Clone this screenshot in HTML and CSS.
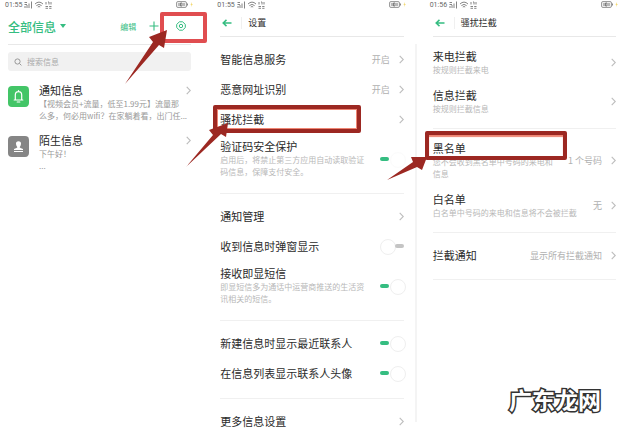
FILE: index.html
```
<!DOCTYPE html>
<html lang="zh-CN">
<head>
    <meta charset="UTF-8">
    <meta name="viewport" content="width=device-width, initial-scale=1.0">
    <title>骚扰拦截设置</title>
    <link rel="stylesheet" href="styles.css">
</head>
<body>
    <!-- Shared icons -->
    <svg class="sprite" aria-hidden="true">
        <symbol id="chevron" viewBox="0 0 5 9">
            <path d="M0.7 0.8 L4.3 4.5 L0.7 8.2" fill="none" stroke="#bdbdbd" stroke-width="1.1"/>
        </symbol>
        <symbol id="back" viewBox="0 0 10 8">
            <path d="M9.5 4 H1.5 M4.5 0.9 L1.2 4 L4.5 7.1" fill="none" stroke="#35bd81" stroke-width="1.5"/>
        </symbol>
        <symbol id="signal" viewBox="0 0 28 8">
            <g fill="none" stroke="#777" stroke-width="0.9">
                <path d="M0.5 1.5 H3 M0.5 3.5 H3 M1 7 V5 M3 7 V4 M5 7 V2.5 M7.5 7.5 V0.5"/>
                <path d="M11 3 Q15 -0.8 19 3 M12.4 4.6 Q15 2.2 17.6 4.6 M13.8 6 Q15 5 16.2 6"/>
                <path d="M22 1 V3.5 M24 1 H25 V3.5 M27 1 V3.5 M21.5 5.5 H24 M21.5 7.3 H24 M25.2 5.5 H27.5 M25.2 7.3 H27.5"/>
            </g>
        </symbol>
        <symbol id="battery" viewBox="0 0 17 7">
            <rect x="0.5" y="0.5" width="10" height="6" rx="1.5" fill="#eee" stroke="#888" stroke-width="0.8"/>
            <path d="M3 2 V5 M4.5 2 H6 V5 H4.5 Z M8 2 V5 M11.5 2.5 V4.5" fill="none" stroke="#666" stroke-width="0.8"/>
            <path d="M15.8 1 L14.5 3.8 H15.6 L15 6 L16.7 3 H15.6 Z" fill="#f2d35c"/>
        </symbol>
    </svg>

    <main class="screens">
        <section class="screen inbox">
            <div class="status-bar">
                <span>01:55</span>
                <svg class="signal"><use href="#signal"/></svg>
                <svg class="battery"><use href="#battery"/></svg>
            </div>
            <header class="inbox-head">
                <button class="inbox-title">全部信息 <span class="caret"></span></button>
                <button class="edit">编辑</button>
                <button class="icon-button" aria-label="新建">
                    <svg width="10" height="10" viewBox="0 0 10 10"><path d="M5 0.5 V9.5 M0.5 5 H9.5" stroke="#35bd81" stroke-width="1.1"/></svg>
                </button>
                <button class="icon-button settings" aria-label="设置">
                    <svg width="10" height="10" viewBox="0 0 10 10" fill="none" stroke="#35bd81">
                        <path d="M3.4 0.8 H6.6 L9.3 3.4 V6.6 L6.6 9.2 H3.4 L0.7 6.6 V3.4 Z" stroke-linejoin="round"/>
                        <circle cx="5" cy="5" r="1.7"/>
                    </svg>
                </button>
            </header>
            <label class="search">
                <svg width="8" height="8" viewBox="0 0 8 8" fill="none" stroke="#999"><circle cx="3.5" cy="3.5" r="2.6"/><path d="M5.4 5.4 L7.4 7.4"/></svg>
                <input type="text" placeholder="搜索信息" aria-label="搜索信息">
            </label>
            <article class="message">
                <svg class="avatar" viewBox="0 0 21 21">
                    <rect width="21" height="21" rx="4" fill="#43c567"/>
                    <path d="M6.2 14 H14.8 M7.3 13.5 V9 Q7.3 5.6 10.5 5.6 Q13.7 5.6 13.7 9 V13.5 M10.5 4.6 V5.6 M9.2 16 H11.8" fill="none" stroke="#fff" stroke-width="1.2" stroke-linecap="round"/>
                </svg>
                <div class="message-body">
                    <h2>通知信息 <svg class="chevron"><use href="#chevron"/></svg></h2>
                    <p>【视频会员+流量，低至1.99元】流量那<br>么多，何必用wifi？在家躺着看，出门任...</p>
                </div>
            </article>
            <article class="message">
                <svg class="avatar" viewBox="0 0 21 21">
                    <rect width="21" height="21" rx="4" fill="#858585"/>
                    <path d="M10.5 5.2 Q13.2 5.2 13 8 Q12.8 10 11.6 11.2 Q11.8 12 15 13 V14 H6 V13 Q9.2 12 9.4 11.2 Q8.2 10 8 8 Q7.8 5.2 10.5 5.2 Z M6 15 H15 V16 H6 Z" fill="#fff"/>
                </svg>
                <div class="message-body">
                    <h2>陌生信息 <svg class="chevron"><use href="#chevron"/></svg></h2>
                    <p>下午好！<br>...</p>
                </div>
            </article>
            <div class="mark mark-settings"></div>
            <svg class="arrow arrow-settings" viewBox="0 0 44 56">
                <path d="M43 1 L40 19 L35 16 L1 55 L29 13 L25 8 Z"/>
            </svg>
        </section>

        <section class="screen settings-page">
            <div class="status-bar">
                <span>01:55</span>
                <svg class="signal"><use href="#signal"/></svg>
                <svg class="battery"><use href="#battery"/></svg>
            </div>
            <header class="page-head">
                <button class="back" aria-label="返回"><svg width="10" height="8"><use href="#back"/></svg></button>
                <h1>设置</h1>
            </header>
            <div class="group">
                <div class="row"><span class="name">智能信息服务</span><span class="value">开启</span><svg class="chevron"><use href="#chevron"/></svg></div>
                <div class="row"><span class="name">恶意网址识别</span><span class="value">开启</span><svg class="chevron"><use href="#chevron"/></svg></div>
                <div class="row"><span class="name">骚扰拦截</span><svg class="chevron"><use href="#chevron"/></svg></div>
                <label class="row">
                    <span class="name">验证码安全保护<small>启用后，将禁止第三方应用自动读取验证码信息，保障支付安全。</small></span>
                    <input type="checkbox" class="switch faint" checked>
                </label>
            </div>
            <div class="group">
                <div class="row"><span class="name">通知管理</span><svg class="chevron"><use href="#chevron"/></svg></div>
                <label class="row"><span class="name">收到信息时弹窗显示</span><input type="checkbox" class="switch"></label>
                <label class="row">
                    <span class="name">接收即显短信<small>即显短信多为通话中运营商推送的生活资讯相关的短信。</small></span>
                    <input type="checkbox" class="switch" checked>
                </label>
            </div>
            <div class="group">
                <label class="row"><span class="name">新建信息时显示最近联系人</span><input type="checkbox" class="switch" checked></label>
                <label class="row"><span class="name">在信息列表显示联系人头像</span><input type="checkbox" class="switch" checked></label>
            </div>
            <div class="group last">
                <div class="row"><span class="name">更多信息设置</span><svg class="chevron"><use href="#chevron"/></svg></div>
            </div>
            <div class="mark mark-block"></div>
            <svg class="arrow arrow-block" viewBox="0 0 46 46">
                <path d="M43 1 L41 15 L36 12 L1 45 L28 13 L24 8 Z"/>
            </svg>
        </section>

        <section class="screen block-page">
            <div class="status-bar">
                <span>01:56</span>
                <svg class="signal"><use href="#signal"/></svg>
                <svg class="battery"><use href="#battery"/></svg>
            </div>
            <header class="page-head">
                <button class="back" aria-label="返回"><svg width="10" height="8"><use href="#back"/></svg></button>
                <h1>骚扰拦截</h1>
            </header>
            <div class="group">
                <div class="row"><span class="name">来电拦截<small>按规则拦截来电</small></span><svg class="chevron"><use href="#chevron"/></svg></div>
                <div class="row"><span class="name">信息拦截<small>按规则拦截信息</small></span><svg class="chevron"><use href="#chevron"/></svg></div>
            </div>
            <div class="group">
                <div class="row"><span class="name">黑名单<small>您不会收到黑名单中号码的来电和信息</small></span><span class="value">1 个号码</span><svg class="chevron"><use href="#chevron"/></svg></div>
                <div class="row"><span class="name">白名单<small>白名单中号码的来电和信息将不会被拦截</small></span><span class="value">无</span><svg class="chevron"><use href="#chevron"/></svg></div>
            </div>
            <div class="group">
                <div class="row"><span class="name">拦截通知</span><span class="value">显示所有拦截通知</span><svg class="chevron"><use href="#chevron"/></svg></div>
            </div>
            <div class="mark mark-blacklist"></div>
            <svg class="arrow arrow-blacklist" viewBox="0 0 42 25">
                <path d="M41 1 L36 14 L31 11 L1 24 L27 6 L25 1 Z"/>
            </svg>
        </section>
    </main>
    <div class="watermark">广东龙网</div>
</body>
</html>
```
FILE: styles.css
```
* {
    box-sizing: border-box;
}

body {
    margin: 0;
    background-color: #fff;
    color: #2b2b2b;
    font-family: "Noto Sans CJK SC", sans-serif;
    font-size: 11px;
    position: relative;
    overflow: hidden;
}

h1, h2, p {
    margin: 0;
    font-weight: normal;
}

button {
    padding: 0;
    border: none;
    background: none;
    font-family: inherit;
    color: #35bd81;
    display: flex;
    align-items: center;
}

.sprite {
    position: absolute;
    width: 0;
    height: 0;
}

.screens {
    display: grid;
    grid-template-columns: repeat(3, 1fr);
    gap: 29px;
    padding: 0 23px 0 8px;
}

.screen {
    position: relative;
    min-width: 0;
}

.settings-page::after {
    content: "";
    position: absolute;
    top: 44px;
    bottom: 14px;
    right: -13px;
    width: 2px;
    background-color: #f4f4f4;
}

/* status bar */
.status-bar {
    display: flex;
    align-items: center;
    gap: 2px;
    height: 9px;
    margin-left: -3px;
    font-family: Roboto, sans-serif;
    font-size: 7px;
    color: #666;
}

.signal {
    width: 28px;
    height: 8px;
}

.battery {
    width: 17px;
    height: 7px;
    margin-left: auto;
    margin-right: -2px;
}

/* message list */
.inbox-head {
    display: flex;
    align-items: center;
    height: 36px;
    padding-bottom: 1px;
    border-bottom: 1px solid #e8e8e8;
}

.inbox-title {
    margin-right: auto;
    gap: 4px;
    font-size: 12px;
    font-weight: 500;
}

.caret {
    border: 3px solid transparent;
    border-top: 4px solid #35bd81;
    border-bottom: 0;
}

.edit {
    font-size: 8px;
}

.icon-button {
    margin-left: 13px;
}

.icon-button.settings {
    margin-left: 17px;
    margin-right: 5px;
}

.search {
    display: flex;
    align-items: center;
    gap: 5px;
    height: 19px;
    margin: 7px 0 12px;
    padding: 0 6px;
    border-radius: 3px;
    background-color: #f1f1f1;
}

.search input {
    flex: 1;
    min-width: 0;
    padding: 0;
    border: none;
    outline: none;
    background: none;
    font-family: inherit;
    font-size: 8px;
}

.search input::placeholder {
    color: #aaa;
}

.message {
    display: flex;
    gap: 10px;
    height: 50px;
}

.avatar {
    flex: none;
    width: 21px;
    height: 21px;
    margin-top: 3px;
}

.message-body {
    flex: 1;
    min-width: 0;
}

.message h2 {
    display: flex;
    align-items: center;
    justify-content: space-between;
    font-size: 11px;
    line-height: 15px;
}

.message p {
    font-size: 8px;
    line-height: 12px;
    color: #999;
    white-space: nowrap;
}

.chevron {
    flex: none;
    width: 5px;
    height: 9px;
}

/* settings pages */
.page-head {
    display: flex;
    align-items: center;
    height: 28px;
    border-bottom: 1px solid #e8e8e8;
}

.page-head h1 {
    padding-left: 6px;
    border-left: 1px solid #f0f0f0;
    font-size: 9px;
    line-height: 12px;
}

.back {
    margin: 0 9px 0 2px;
}

.group {
    padding: 7px 0 10px;
    border-bottom: 1px solid #f0f0f0;
}

.group.last {
    padding-bottom: 0;
    border-bottom: none;
}

.row {
    display: flex;
    align-items: center;
    min-height: 30px;
    padding: 5px 0;
}

.name {
    flex: 1;
    line-height: 15px;
}

.name small {
    display: block;
    font-size: 8px;
    line-height: 12px;
    color: #b8b8b8;
}

.value {
    margin-left: 8px;
    font-size: 9px;
    color: #b0b0b0;
}

.value + .chevron {
    margin-left: 9px;
}

.switch {
    appearance: none;
    position: relative;
    flex: none;
    width: 24px;
    height: 14px;
    margin: 0 0 0 10px;
}

.switch::before {
    content: "";
    position: absolute;
    top: 0;
    left: 0;
    width: 14px;
    height: 14px;
    border: 1px solid #efefef;
    border-radius: 50%;
}

.switch::after {
    content: "";
    position: absolute;
    top: 5px;
    right: 0;
    width: 9px;
    height: 4px;
    border-radius: 2px;
    background-color: #c4c4c4;
}

.switch:checked::before {
    left: 10px;
}

.switch:checked::after {
    right: 15px;
    background-color: #35bd81;
}

.switch.faint::before {
    border-color: #fbfbfb;
}

.block-page .group {
    padding: 6px 0 7px;
}

.block-page .row {
    min-height: 33px;
    padding: 6px 0;
}

/* red boxes and arrows */
.mark {
    position: absolute;
    border: 4px solid #9c2822;
    border-radius: 2px;
}

.mark-settings {
    top: 12px;
    right: -16px;
    width: 47px;
    height: 31px;
    border-color: #e04d50;
}

.mark-block {
    top: 105px;
    left: -7px;
    width: 148px;
    height: 28px;
    box-shadow: inset 0 0 0 1px #ee8573;
}

.mark-blacklist {
    top: 131px;
    left: -8px;
    width: 142px;
    height: 29px;
    box-shadow: inset 0 2px 1px #ee8573;
}

.arrow {
    position: absolute;
    fill: #9c2822;
}

.arrow-settings {
    top: 29px;
    right: 23px;
    width: 44px;
    height: 56px;
}

.arrow-block {
    top: 122px;
    left: -35px;
    width: 46px;
    height: 46px;
}

.arrow-blacklist {
    top: 156px;
    left: -47px;
    width: 42px;
    height: 25px;
}

.watermark {
    position: absolute;
    right: 38px;
    bottom: 23px;
    font-size: 23px;
    line-height: 28px;
    font-weight: bold;
    color: #fff;
    -webkit-text-stroke: 3px #333;
    paint-order: stroke fill;
}
```
